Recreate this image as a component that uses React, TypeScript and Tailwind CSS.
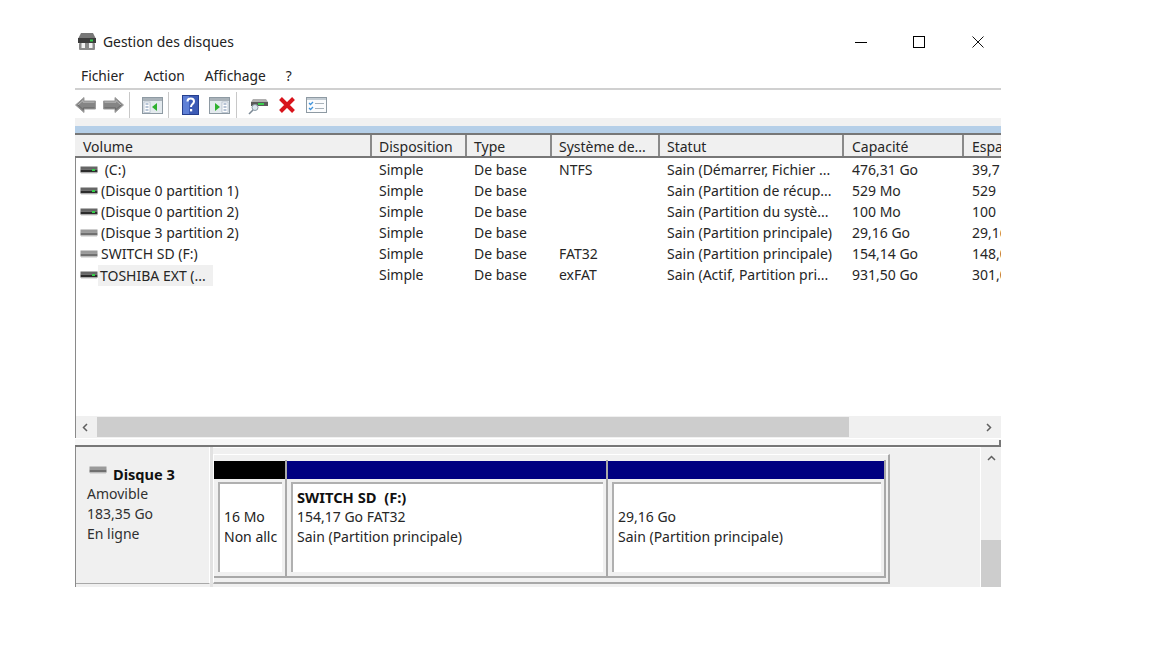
import React from "react";

const cols = "grid grid-cols-[296px_95px_85px_108px_185px_120px_37px]";
const headCols = "grid grid-cols-[297px_95px_85px_108px_184px_120px_37px]";
const headers = ["Volume", "Disposition", "Type", "Système de...", "Statut", "Capacité", "Espa"];
const rows = [
  ["\u00a0(C:)", "Simple", "De base", "NTFS", "Sain (Démarrer, Fichier ...", "476,31 Go", "39,7", "g"],
  ["(Disque 0 partition 1)", "Simple", "De base", "", "Sain (Partition de récup...", "529 Mo", "529", "g"],
  ["(Disque 0 partition 2)", "Simple", "De base", "", "Sain (Partition du systè...", "100 Mo", "100", "g"],
  ["(Disque 3 partition 2)", "Simple", "De base", "", "Sain (Partition principale)", "29,16 Go", "29,16", "n"],
  ["SWITCH SD (F:)", "Simple", "De base", "FAT32", "Sain (Partition principale)", "154,14 Go", "148,0", "n"],
  ["TOSHIBA EXT (...", "Simple", "De base", "exFAT", "Sain (Actif, Partition pri...", "931,50 Go", "301,0", "g"],
];

function Drive({ led }: { led: boolean }) {
  return (
    <svg width="18" height="8" viewBox="0 0 18 8" className="shrink-0">
      <rect x="0.5" y="0.5" width="17" height="3" fill={led ? "#666" : "#9a9a9a"} />
      <rect x="0.5" y="3.5" width="17" height="3" fill={led ? "#2c2c2c" : "#707070"} />
      <rect x="1" y="6.5" width="16" height="1" fill="#c4c4c4" />
      {led && <rect x="12" y="3" width="3" height="2" fill="#35d04a" />}
    </svg>
  );
}

function AppIcon() {
  return (
    <svg width="18" height="19" viewBox="0 0 18 19">
      <path d="M3 1h12l3 6H0z" fill="#777" />
      <rect x="0" y="6" width="18" height="5" fill="#3c3c3c" />
      <rect x="12" y="7.5" width="3" height="2" fill="#32c94a" />
      <rect x="1" y="11" width="16" height="7" rx="1" fill="#8a8a8a" />
      <rect x="3.5" y="11" width="3.5" height="5" fill="#f2f2f2" />
      <rect x="11" y="11" width="3.5" height="5" fill="#f2f2f2" />
    </svg>
  );
}

function Arrow({ flip }: { flip?: boolean }) {
  return (
    <svg width="21" height="16" viewBox="0 0 21 16" style={flip ? { transform: "scaleX(-1)" } : undefined}>
      <path d="M0.5 8 9 0.5v3.5h11.5v8H9v3.5z" fill="#858585" stroke="#9c9c9c" />
      <path d="M3 8 8 3.5V5.2h11.5" fill="none" stroke="#b8b8b8" />
      <path d="M3 8 8.5 12.8V10.8h11" fill="none" stroke="#6c6c6c" />
    </svg>
  );
}

function Panel({ green, right }: { green: "left" | "right"; right?: boolean }) {
  return (
    <svg width="21" height="17" viewBox="0 0 21 17">
      <rect x="0.5" y="0.5" width="20" height="16" fill="#e4eaee" stroke="#8e9aa3" />
      <rect x="1" y="1" width="19" height="3" fill="#aab3ba" />
      <rect x={right ? 13 : 2} y="5" width="6" height="10.5" fill="#fff" stroke="#a7b4c4" strokeWidth="0.7" />
      <rect x={right ? 14.5 : 3.5} y="6.5" width="3" height="1" fill="#6f89ad" />
      <rect x={right ? 14.5 : 3.5} y="9.5" width="3" height="1" fill="#6f89ad" />
      <rect x={right ? 14.5 : 3.5} y="12.5" width="3" height="1" fill="#6f89ad" />
      {green === "left" ? <path d="M15 6v8l-5-4z" fill="#2fb12f" /> : <path d="M6 6v8l5-4z" fill="#2fb12f" />}
    </svg>
  );
}

function HelpIcon() {
  return (
    <svg width="17" height="20" viewBox="0 0 17 20">
      <rect x="0.5" y="0.5" width="16" height="19" fill="#3c5bb5" stroke="#263f8e" />
      <rect x="1" y="1" width="6" height="18" fill="#5f80d6" />
      <path d="M5.5 6.5c0-4 6.5-4 6.5 0 0 2.6-3 2.6-3 5.5" fill="none" stroke="#fff" strokeWidth="2" />
      <rect x="8" y="14" width="2.2" height="2.4" fill="#fff" />
    </svg>
  );
}

function ScanIcon() {
  return (
    <svg width="20" height="17" viewBox="0 0 20 17" className="mt-[3px]">
      <path d="M5 1h13l2 3v4H3V4z" fill="#b0b0b0" />
      <rect x="3" y="4" width="17" height="4" fill="#5a5a5a" />
      <rect x="10" y="5" width="6" height="2" fill="#39cf4d" />
      <circle cx="7" cy="9.5" r="3" fill="#dbe6ee" stroke="#8a99a5" />
      <path d="M5 12 1 16" stroke="#7d8a96" strokeWidth="1.6" />
    </svg>
  );
}

function CheckList() {
  return (
    <svg width="21" height="16" viewBox="0 0 21 16">
      <rect x="0.5" y="0.5" width="20" height="15" fill="#fbfcfd" stroke="#8e9aa3" />
      <rect x="1" y="1" width="19" height="2" fill="#c3ccd3" />
      <path d="M3 6l1.5 1.5L7 5M3 11l1.5 1.5L7 10" fill="none" stroke="#3f94dc" strokeWidth="1.3" />
      <rect x="9" y="6" width="9" height="1" fill="#a9b3bb" />
      <rect x="9" y="11" width="9" height="1" fill="#a9b3bb" />
    </svg>
  );
}

function Sep() {
  return <div className="w-px h-[26px] bg-[#c8c8c8] shrink-0" />;
}

function Partition({ bar, width, children }: { bar: string; width: string; children: React.ReactNode }) {
  return (
    <div className={`${width} flex flex-col shrink-0 border-r-2 border-b-2 border-[#a8a8a8]`}>
      <div className={`h-[18px] ${bar} mt-[1px] shrink-0`} />
      <div className="flex-1 pt-[3px] pl-[4px] pr-[3px] pb-[4px] flex min-h-0">
        <div className="flex-1 bg-white border-l-2 border-t-2 border-[#b0b0b0] overflow-hidden whitespace-nowrap pl-[4px] pt-[3px] leading-[20px]">
          {children}
        </div>
      </div>
    </div>
  );
}

export default function App() {
  return (
    <div className="w-[1152px] h-[648px] bg-white overflow-hidden pl-[75px] text-[14px] text-[#262626] font-['Noto_Sans',sans-serif]">
      <div className="w-[926px] h-[587px] flex flex-col">
        {/* title bar */}
        <div className="h-[63px] pt-[32px] flex items-start shrink-0">
          <div className="ml-[3px] w-[18px] h-[19px] shrink-0"><AppIcon /></div>
          <span className="ml-[7px] text-[#222] leading-[20px] text-[13.9px]">Gestion des disques</span>
          <div className="ml-auto flex items-center mt-[4px] mr-[17px] gap-[46px]">
            <div className="w-[12px] h-px bg-black" />
            <div className="w-[12px] h-[12px] border border-black" />
            <svg width="12" height="12" viewBox="0 0 12 12" className="ml-px"><path d="M.5.5l11 11M11.5.5l-11 11" stroke="#111" strokeWidth="1" /></svg>
          </div>
        </div>
        {/* menu */}
        <div className="h-[27px] flex items-start pl-[6px] gap-[20px] border-b-2 border-[#d0d0d0] leading-[26px] shrink-0 text-[#222] text-[13.8px]">
          <span>Fichier</span><span>Action</span><span>Affichage</span><span>?</span>
        </div>
        {/* toolbar */}
        <div className="h-[28px] flex items-center shrink-0 pt-[2px]">
          <div className="w-[54px] flex gap-[7px] shrink-0"><Arrow /><Arrow flip /></div>
          <Sep />
          <div className="w-[38px] pl-[12px] flex shrink-0"><Panel green="left" /></div>
          <Sep />
          <div className="flex items-center gap-[10px] pl-[13px] pr-[6px] shrink-0"><HelpIcon /><Panel green="right" right /></div>
          <Sep />
          <div className="flex items-center pl-[11px] gap-[10px]">
            <ScanIcon />
            <svg width="18" height="18" viewBox="0 0 18 18"><path d="M2.5 2.5l13 13M15.5 2.5l-13 13" stroke="#d8141c" strokeWidth="4" /></svg>
            <CheckList />
          </div>
        </div>
        <div className="h-[8px] bg-[#f1f1f1] shrink-0" />
        <div className="h-[7px] bg-[#b5cfe8] shrink-0" />
        {/* header */}
        <div className={`${headCols} h-[25px] bg-[#f0f0f0] border-t-2 border-b-2 border-[#777] shrink-0 leading-[24px] overflow-hidden`}>
          {headers.map((h, i) => (
            <div key={h} className={`${i === 0 || i >= 5 ? "pl-[8px]" : "pl-[7px]"} border-r-2 border-[#8a8a8a] last:border-r-0 whitespace-nowrap overflow-hidden`}>{h}</div>
          ))}
        </div>
        {/* list */}
        <div className="h-[258px] border-l border-[#8a8a8a] pt-[1px] shrink-0 overflow-hidden">
          {rows.map((r) => (
            <div key={r[0]} className={`${cols} h-[21.1px] leading-[21px] -ml-px`}>
              <div className="flex items-center pl-[5px] gap-[3px] whitespace-nowrap">
                <Drive led={r[7] === "g"} />
                <span className={r[0].startsWith("TOSHIBA") ? "bg-[#f0f0f0] -ml-[3px] pl-[2px] pr-[7px]" : ""}>{r[0]}</span>
              </div>
              {r.slice(1, 7).map((c, i) => (
                <div key={i} className="pl-[8px] whitespace-nowrap overflow-hidden">{c}</div>
              ))}
            </div>
          ))}
        </div>
        {/* horizontal scrollbar */}
        <div className="h-[22px] bg-[#f0f0f0] flex items-center shrink-0 border-l border-[#8a8a8a]">
          <div className="w-[21px] flex pl-[6px]">
            <svg width="6" height="9" viewBox="0 0 6 9"><path d="M5 1 1.5 4.5 5 8" fill="none" stroke="#606060" strokeWidth="1.5" /></svg>
          </div>
          <div className="w-[752px] h-[20px] bg-[#cdcdcd]" />
          <div className="flex-1 flex justify-end pr-[9px]">
            <svg width="6" height="9" viewBox="0 0 6 9"><path d="M1 1l3.5 3.5L1 8" fill="none" stroke="#606060" strokeWidth="1.5" /></svg>
          </div>
        </div>
        <div className="h-[9px] shrink-0 bg-[#f7f7f7] border-b-2 border-[#777] border-t border-t-white flex justify-end items-end">
          <div className="w-[2px] h-[5px] bg-[#777]" />
        </div>
        {/* disks */}
        <div className="flex-1 flex min-h-0 bg-[#f0f0f0] border-l border-[#8a8a8a]">
          <div className="w-[134px] h-[137px] shrink-0 border-r border-white border-b border-b-[#a8a8a8] pl-[11px] pt-[18px] leading-[20px] text-[#303030]">
            <div className="flex items-center font-bold text-[#111] h-[20px] -mt-px text-[14.6px]">
              <span className="-mt-[9px] ml-[2px] mr-[6px]"><Drive led={false} /></span>Disque 3
            </div>
            <div>Amovible</div>
            <div>183,35 Go</div>
            <div>En ligne</div>
          </div>
          <div className="w-[3px] bg-[#e2e2e2] shrink-0" />
          <div className="flex-1 border-t border-white flex flex-col min-w-0">
            <div className="h-[6px] shrink-0" />
            <div className="w-[677px] h-[130px] flex border-t border-l border-white border-r-2 border-r-[#a8a8a8] border-b-2 border-b-[#a8a8a8] pt-[5px] pb-[4px] bg-[#f0f0f0]">
              <Partition bar="bg-black" width="w-[73px]">
                <div className="pt-[20px] text-[#222]">16 Mo</div>
                <div className="text-[#222]">Non allc</div>
              </Partition>
              <Partition bar="bg-[#000080]" width="w-[321px]">
                <div className="font-bold text-[#111] text-[14.7px]">SWITCH SD&nbsp; (F:)</div>
                <div>154,17 Go FAT32</div>
                <div>Sain (Partition principale)</div>
              </Partition>
              <Partition bar="bg-[#000080]" width="w-[278px]">
                <div className="pt-[20px]">29,16 Go</div>
                <div>Sain (Partition principale)</div>
              </Partition>
            </div>
          </div>
          <div className="w-[21px] shrink-0 border-l border-white bg-[#f0f0f0] flex flex-col items-center justify-between">
            <svg width="9" height="6" viewBox="0 0 9 6" className="mt-[8px]"><path d="M1 5l3.5-3.5L8 5" fill="none" stroke="#606060" strokeWidth="1.5" /></svg>
            <div className="w-full h-[47px] bg-[#cdcdcd]" />
          </div>
        </div>
      </div>
    </div>
  );
}
